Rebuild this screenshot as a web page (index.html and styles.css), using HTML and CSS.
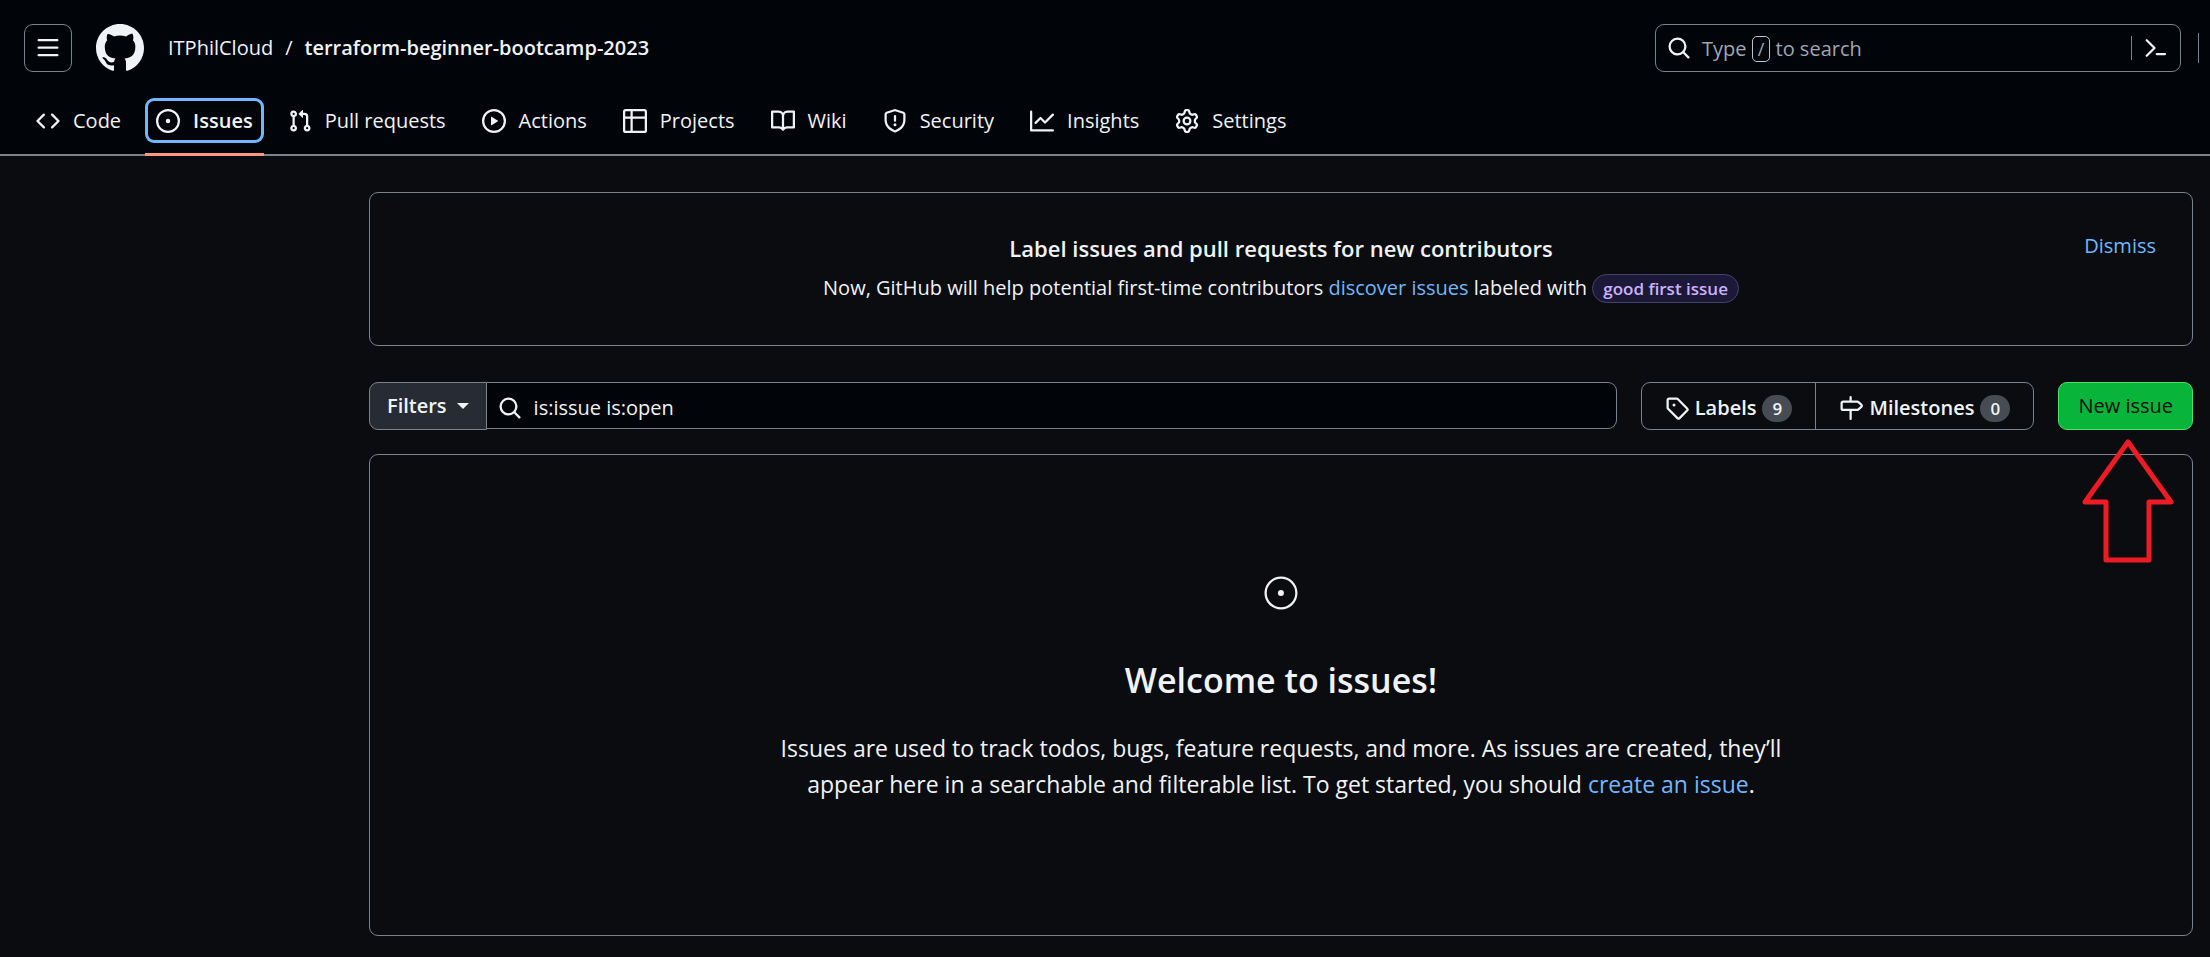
FILE: index.html
```html
<!DOCTYPE html>
<html lang="en">
<head>
<meta charset="utf-8">
<title>Issues · ITPhilCloud/terraform-beginner-bootcamp-2023</title>
<link rel="stylesheet" href="styles.css">
</head>
<body>
<header class="header">
  <div class="topbar">
    <button class="menu-btn" type="button" aria-label="Open menu">
      <svg class="icon" viewBox="0 0 16 16"><path d="M1 2.75A.75.75 0 0 1 1.75 2h12.5a.75.75 0 0 1 0 1.5H1.75A.75.75 0 0 1 1 2.75Zm0 5A.75.75 0 0 1 1.75 7h12.5a.75.75 0 0 1 0 1.5H1.75A.75.75 0 0 1 1 7.75ZM1.75 12h12.5a.75.75 0 0 1 0 1.5H1.75a.75.75 0 0 1 0-1.5Z"/></svg>
    </button>
    <a class="logo" href="#" aria-label="Homepage">
      <svg class="logo-mark" viewBox="0 0 16 16"><path d="M8 0c4.42 0 8 3.58 8 8a8.013 8.013 0 0 1-5.45 7.59c-.4.08-.55-.17-.55-.38 0-.27.01-1.13.01-2.2 0-.75-.25-1.23-.54-1.48 1.78-.2 3.65-.88 3.65-3.95 0-.88-.31-1.59-.82-2.15.08-.2.36-1.02-.08-2.12 0 0-.67-.22-2.2.82-.64-.18-1.32-.27-2-.27-.68 0-1.36.09-2 .27-1.53-1.03-2.2-.82-2.2-.82-.44 1.1-.16 1.92-.08 2.12-.51.56-.82 1.28-.82 2.15 0 3.06 1.86 3.75 3.64 3.95-.23.2-.44.55-.51 1.07-.46.21-1.61.55-2.33-.66-.15-.24-.6-.83-1.23-.82-.67.01-.27.38.01.53.34.19.73.9.82 1.13.16.45.68 1.31 2.69.94 0 .67.01 1.3.01 1.49 0 .21-.15.45-.55.38A7.995 7.995 0 0 1 0 8c0-4.42 3.58-8 8-8Z"/></svg>
    </a>
    <nav class="crumbs" aria-label="Breadcrumb">
      <a href="#">ITPhilCloud</a>
      <span class="slash">/</span>
      <a class="crumb-current" href="#">terraform-beginner-bootcamp-2023</a>
    </nav>
    <div class="search">
      <button class="search-btn" type="button">
        <svg class="icon" viewBox="0 0 16 16"><path d="M10.68 11.74a6 6 0 0 1-7.922-8.982 6 6 0 0 1 8.982 7.922l3.04 3.04a.749.749 0 0 1-.326 1.275.749.749 0 0 1-.734-.215ZM11.5 7a4.499 4.499 0 1 0-8.997 0A4.499 4.499 0 0 0 11.5 7Z"/></svg>
        <span class="search-hint">Type <kbd>/</kbd> to search</span>
      </button>
      <button class="command-btn" type="button" aria-label="Command palette">
        <svg class="icon" viewBox="0 0 16 16" fill="none" stroke="currentColor" stroke-width="1.5" stroke-linecap="round" stroke-linejoin="round"><path d="M1.8 2.8 7 8l-5.200 5.200M8.500 12h5.500"/></svg>
      </button>
    </div>
    <span class="divider"></span>
  </div>
  <nav class="tabs" aria-label="Repository">
    <a class="tab" href="#"><svg class="icon" viewBox="0 0 16 16"><path d="m11.28 3.22 4.25 4.25a.75.75 0 0 1 0 1.06l-4.25 4.25a.749.749 0 0 1-1.275-.326.749.749 0 0 1 .215-.734L13.94 8l-3.72-3.72a.749.749 0 0 1 .326-1.275.749.749 0 0 1 .734.215Zm-6.56 0a.751.751 0 0 1 1.042.018.751.751 0 0 1 .018 1.042L2.06 8l3.72 3.72a.749.749 0 0 1-.326 1.275.749.749 0 0 1-.734-.215L.47 8.53a.75.75 0 0 1 0-1.06Z"/></svg>Code</a>
    <a class="tab tab-active" href="#" aria-current="page"><svg class="icon" viewBox="0 0 16 16"><path d="M8 9.500a1.500 1.500 0 1 0 0-3 1.500 1.500 0 0 0 0 3Z"/><path d="M8 0a8 8 0 1 1 0 16A8 8 0 0 1 8 0ZM1.500 8a6.500 6.500 0 1 0 13 0 6.500 6.500 0 0 0-13 0Z"/></svg>Issues</a>
    <a class="tab" href="#"><svg class="icon" viewBox="0 0 16 16"><path d="M1.500 3.250a2.250 2.250 0 1 1 3 2.122v5.256a2.251 2.251 0 1 1-1.500 0V5.372A2.250 2.250 0 0 1 1.500 3.250Zm5.677-.177L9.573.677A.25.25 0 0 1 10 .854V2.500h1A2.500 2.500 0 0 1 13.500 5v5.628a2.251 2.251 0 1 1-1.500 0V5a1 1 0 0 0-1-1h-1v1.646a.25.25 0 0 1-.427.177L7.177 3.427a.25.25 0 0 1 0-.354ZM3.750 2.500a.75.75 0 1 0 0 1.500.75.75 0 0 0 0-1.500Zm0 9.500a.75.75 0 1 0 0 1.500.75.75 0 0 0 0-1.500Zm8.250.75a.75.75 0 1 0 1.500 0 .75.75 0 0 0-1.500 0Z"/></svg>Pull requests</a>
    <a class="tab" href="#"><svg class="icon" viewBox="0 0 16 16"><path d="M8 0a8 8 0 1 1 0 16A8 8 0 0 1 8 0ZM1.500 8a6.500 6.500 0 1 0 13 0 6.500 6.500 0 0 0-13 0Zm4.879-2.773 4.264 2.559a.25.25 0 0 1 0 .428l-4.264 2.559A.25.25 0 0 1 6 10.559V5.442a.25.25 0 0 1 .379-.215Z"/></svg>Actions</a>
    <a class="tab" href="#"><svg class="icon" viewBox="0 0 16 16"><path d="M0 1.750C0 .784.784 0 1.750 0h12.500C15.216 0 16 .784 16 1.750v12.500A1.750 1.750 0 0 1 14.250 16H1.750A1.750 1.750 0 0 1 0 14.250ZM6.500 6.500v8h7.750a.25.25 0 0 0 .25-.25V6.500Zm8-1.500V1.750a.25.25 0 0 0-.25-.25H6.500V5Zm-13 1.500v7.750c0 .138.112.25.25.25H5v-8ZM5 5V1.500H1.750a.25.25 0 0 0-.25.25V5Z"/></svg>Projects</a>
    <a class="tab" href="#"><svg class="icon" viewBox="0 0 16 16"><path d="M0 1.750A.75.75 0 0 1 .75 1h4.253c1.227 0 2.317.59 3 1.501A3.743 3.743 0 0 1 11.006 1h4.245a.75.75 0 0 1 .75.75v10.500a.75.75 0 0 1-.75.75h-4.507a2.250 2.250 0 0 0-1.591.659l-.622.621a.75.75 0 0 1-1.060 0l-.622-.621A2.250 2.250 0 0 0 5.258 13H.75a.75.75 0 0 1-.75-.75Zm7.251 10.324.004-5.073-.002-2.253A2.250 2.250 0 0 0 5.003 2.500H1.500v9h3.757a3.750 3.750 0 0 1 1.994.574ZM8.755 4.750l-.004 7.322a3.752 3.752 0 0 1 1.992-.572H14.500v-9h-3.495a2.250 2.250 0 0 0-2.250 2.250Z"/></svg>Wiki</a>
    <a class="tab" href="#"><svg class="icon" viewBox="0 0 16 16"><path d="M7.467.133a1.748 1.748 0 0 1 1.066 0l5.250 1.680A1.750 1.750 0 0 1 15 3.480V7c0 1.566-.32 3.182-1.303 4.682-.983 1.498-2.585 2.813-5.032 3.855a1.697 1.697 0 0 1-1.330 0c-2.447-1.042-4.049-2.357-5.032-3.855C1.320 10.182 1 8.566 1 7V3.480a1.750 1.750 0 0 1 1.217-1.667Zm.61 1.429a.25.25 0 0 0-.153 0l-5.250 1.680a.25.25 0 0 0-.174.238V7c0 1.358.275 2.666 1.057 3.860.784 1.194 2.121 2.340 4.366 3.297a.196.196 0 0 0 .154 0c2.245-.956 3.582-2.104 4.366-3.298C13.225 9.666 13.500 8.360 13.500 7V3.480a.251.251 0 0 0-.174-.237l-5.250-1.680ZM8.750 4.750v3a.75.75 0 0 1-1.500 0v-3a.75.75 0 0 1 1.500 0ZM9 10.500a1 1 0 1 1-2 0 1 1 0 0 1 2 0Z"/></svg>Security</a>
    <a class="tab" href="#"><svg class="icon" viewBox="0 0 16 16"><path d="M1.500 1.750V13.500h13.750a.75.75 0 0 1 0 1.500H.75a.75.75 0 0 1-.75-.75V1.750a.75.75 0 0 1 1.500 0Zm14.280 2.530-5.250 5.250a.75.75 0 0 1-1.060 0L7 7.060 4.280 9.780a.751.751 0 0 1-1.042-.018.751.751 0 0 1-.018-1.042l3.250-3.250a.75.75 0 0 1 1.060 0L10 7.940l4.720-4.720a.751.751 0 0 1 1.042.018.751.751 0 0 1 .018 1.042Z"/></svg>Insights</a>
    <a class="tab" href="#"><svg class="icon" viewBox="0 0 16 16"><path d="M8 0a8.200 8.200 0 0 1 .701.031C9.444.095 9.990.645 10.160 1.290l.288 1.107c.018.066.079.158.212.224.231.114.454.243.668.386.123.082.233.090.299.071l1.103-.303c.644-.176 1.392.021 1.820.630.270.385.506.792.704 1.218.315.675.111 1.422-.364 1.891l-.814.806c-.049.048-.098.147-.088.294.016.257.016.515 0 .772-.010.147.038.246.088.294l.814.806c.475.469.679 1.216.364 1.891a7.977 7.977 0 0 1-.704 1.217c-.428.610-1.176.807-1.820.630l-1.102-.302c-.067-.019-.177-.011-.300.071a5.909 5.909 0 0 1-.668.386c-.133.066-.194.158-.211.224l-.290 1.106c-.168.646-.715 1.196-1.458 1.260a8.006 8.006 0 0 1-1.402 0c-.743-.064-1.289-.614-1.458-1.260l-.289-1.106c-.018-.066-.079-.158-.212-.224a5.738 5.738 0 0 1-.668-.386c-.123-.082-.233-.090-.299-.071l-1.103.303c-.644.176-1.392-.021-1.820-.630a8.120 8.120 0 0 1-.704-1.218c-.315-.675-.111-1.422.363-1.891l.815-.806c.050-.048.098-.147.088-.294a6.214 6.214 0 0 1 0-.772c.010-.147-.038-.246-.088-.294l-.815-.806C.635 6.045.431 5.298.746 4.623a7.920 7.920 0 0 1 .704-1.217c.428-.610 1.176-.807 1.820-.630l1.102.302c.067.019.177.011.300-.071.214-.143.437-.272.668-.386.133-.066.194-.158.211-.224l.290-1.106C6.009.645 6.556.095 7.299.030 7.530.010 7.764 0 8 0Zm-.571 1.525c-.036.003-.108.036-.137.146l-.289 1.105c-.147.561-.549.967-.998 1.189-.173.086-.340.183-.500.290-.417.278-.970.423-1.529.270l-1.103-.303c-.109-.030-.175.016-.195.045-.220.312-.412.644-.573.990-.014.031-.021.110.059.190l.815.806c.411.406.562.957.530 1.456a4.709 4.709 0 0 0 0 .582c.032.499-.119 1.050-.530 1.456l-.815.806c-.081.080-.073.159-.059.190.162.346.353.677.573.989.020.030.085.076.195.046l1.102-.303c.560-.153 1.113-.008 1.530.270.161.107.328.204.501.290.447.222.850.629.997 1.189l.289 1.105c.029.109.101.143.137.146a6.600 6.600 0 0 0 1.142 0c.036-.003.108-.036.137-.146l.289-1.105c.147-.561.549-.967.998-1.189.173-.086.340-.183.500-.290.417-.278.970-.423 1.529-.270l1.103.303c.109.029.175-.016.195-.045.220-.313.411-.644.573-.990.014-.031.021-.110-.059-.190l-.815-.806c-.411-.406-.562-.957-.530-1.456a4.709 4.709 0 0 0 0-.582c-.032-.499.119-1.050.530-1.456l.815-.806c.081-.080.073-.159.059-.190a6.464 6.464 0 0 0-.573-.989c-.020-.030-.085-.076-.195-.046l-1.102.303c-.560.153-1.113.008-1.530-.270a4.440 4.440 0 0 0-.501-.290c-.447-.222-.850-.629-.997-1.189l-.289-1.105c-.029-.110-.101-.143-.137-.146a6.600 6.600 0 0 0-1.142 0ZM11 8a3 3 0 1 1-6 0 3 3 0 0 1 6 0ZM9.500 8a1.500 1.500 0 1 0-3.001.001A1.500 1.500 0 0 0 9.500 8Z"/></svg>Settings</a>
  </nav>
</header>

<main class="content">
  <section class="banner">
    <div class="banner-text">
      <h2 class="banner-title">Label issues and pull requests for new contributors</h2>
      <p class="banner-line">Now, GitHub will help potential first-time contributors <a href="#">discover issues</a> labeled with <span class="pill">good first issue</span></p>
    </div>
    <button class="dismiss" type="button">Dismiss</button>
  </section>

  <div class="toolbar">
    <form class="filter">
      <button class="filters-btn" type="button">Filters <span class="caret"></span></button>
      <label class="filter-box">
        <svg class="icon" viewBox="0 0 16 16"><path d="M10.68 11.74a6 6 0 0 1-7.922-8.982 6 6 0 0 1 8.982 7.922l3.04 3.04a.749.749 0 0 1-.326 1.275.749.749 0 0 1-.734-.215ZM11.5 7a4.499 4.499 0 1 0-8.997 0A4.499 4.499 0 0 0 11.5 7Z"/></svg>
        <input class="filter-input" type="text" value="is:issue is:open" aria-label="Search all issues">
      </label>
    </form>
    <div class="subnav">
      <a class="subnav-item" href="#"><svg class="icon" viewBox="0 0 16 16"><path d="M1 7.775V2.750C1 1.784 1.784 1 2.750 1h5.025c.464 0 .910.184 1.238.513l6.250 6.250a1.750 1.750 0 0 1 0 2.474l-5.026 5.026a1.750 1.750 0 0 1-2.474 0l-6.250-6.250A1.752 1.752 0 0 1 1 7.775Zm1.500 0c0 .066.026.130.073.177l6.250 6.250a.25.25 0 0 0 .354 0l5.025-5.025a.25.25 0 0 0 0-.354l-6.250-6.250a.25.25 0 0 0-.177-.073H2.750a.25.25 0 0 0-.25.25ZM6 5a1 1 0 1 1 0 2 1 1 0 0 1 0-2Z"/></svg><span>Labels</span><span class="count">9</span></a>
      <a class="subnav-item" href="#"><svg class="icon" viewBox="0 0 16 16"><path d="M7.750 0a.75.75 0 0 1 .75.75V3h3.634c.414 0 .814.147 1.130.414l2.070 1.750a1.750 1.750 0 0 1 0 2.672l-2.070 1.750a1.750 1.750 0 0 1-1.130.414H8.500v5.250a.75.75 0 0 1-1.500 0V10H2.750A1.750 1.750 0 0 1 1 8.250v-3.500C1 3.784 1.784 3 2.750 3H7V.75A.75.75 0 0 1 7.750 0Zm4.384 8.500a.25.25 0 0 0 .161-.060l2.070-1.750a.248.248 0 0 0 0-.380l-2.070-1.750a.25.25 0 0 0-.161-.060H2.750a.25.25 0 0 0-.25.25v3.500c0 .138.112.25.25.25h9.384Z"/></svg><span>Milestones</span><span class="count">0</span></a>
    </div>
    <div class="new-issue">
      <button class="new-btn" type="button">New issue</button>
      <svg class="arrow" viewBox="0 0 92 124" fill="none" stroke="#ed1c24" stroke-width="5" stroke-linejoin="round"><path d="M46 3 89 63H67V121H24V63H3Z"/></svg>
    </div>
  </div>

  <section class="blank">
    <svg class="blank-icon" viewBox="0 0 24 24"><path d="M12 1c6.075 0 11 4.925 11 11s-4.925 11-11 11S1 18.075 1 12 5.925 1 12 1ZM2.500 12a9.500 9.500 0 0 0 9.500 9.500 9.500 9.500 0 0 0 9.500-9.500A9.500 9.500 0 0 0 12 2.500 9.500 9.500 0 0 0 2.500 12Zm9.500 2a2 2 0 1 1-.001-3.999A2 2 0 0 1 12 14Z"/></svg>
    <h1 class="blank-title">Welcome to issues!</h1>
    <p class="blank-text">Issues are used to track todos, bugs, feature requests, and more. As issues are created, they’ll appear here in a searchable and filterable list. To get started, you should <a href="#">create an issue</a>.</p>
  </section>
</main>
</body>
</html>
```

FILE: styles.css
```css
:root {
  --bg: #0a0c10;
  --bg-inset: #010409;
  --fg: #f0f3f6;
  --border: #7a828e;
  --link: #71b7ff;
}

* {
  box-sizing: border-box;
}

body {
  margin: 0;
  min-height: 100vh;
  background: var(--bg);
  color: var(--fg);
  font: 20px/30px "Open Sans", "Noto Sans", sans-serif;
}

button,
input {
  margin: 0;
  padding: 0;
  border: 0;
  background: none;
  color: inherit;
  font: inherit;
}

a {
  color: var(--link);
  text-decoration: none;
}

h1,
h2,
p {
  margin: 0;
}

.icon {
  width: 24px;
  height: 24px;
  flex: none;
  fill: currentColor;
}

.icon[fill="none"] {
  fill: none;
}

/* Header */
.header {
  background: var(--bg-inset);
  border-bottom: 2px solid var(--border);
}

.topbar {
  display: flex;
  align-items: center;
  padding: 24px 11px 0 24px;
}

.menu-btn {
  display: grid;
  place-items: center;
  width: 48px;
  height: 48px;
  border: 1px solid var(--border);
  border-radius: 9px;
}

.logo {
  margin: 0 24px;
  color: var(--fg);
}

.logo-mark {
  display: block;
  width: 48px;
  height: 48px;
  fill: currentColor;
}

.crumbs {
  display: flex;
  gap: 12px;
}

.crumbs a {
  color: var(--fg);
}

.crumbs .crumb-current {
  font-weight: 600;
}

.search {
  display: flex;
  align-items: center;
  width: 526px;
  height: 48px;
  margin-left: auto;
  border: 1px solid var(--border);
  border-radius: 9px;
}

.search-btn {
  display: flex;
  flex: 1;
  align-items: center;
  gap: 11px;
  padding-left: 11px;
}

.search-hint {
  padding-top: 2px;
  color: #9ea7b3;
}

.search-hint kbd {
  padding: 0 5px;
  border: 1px solid #bdc4cc;
  border-radius: 5px;
  font: 18px/24px "Open Sans", sans-serif;
}

.command-btn {
  display: flex;
  padding: 0 12px;
  border-left: 1px solid var(--border);
}

.divider {
  width: 1px;
  height: 30px;
  margin-left: 17px;
  background: var(--border);
}

.tabs {
  display: flex;
  gap: 12px;
  padding: 26px 24px 0;
}

.tab {
  position: relative;
  display: flex;
  align-items: center;
  gap: 13px;
  height: 45px;
  margin-bottom: 11px;
  padding: 0 12px;
  border-radius: 9px;
  color: var(--fg);
}

.tab-active {
  padding: 0 11px;
  font-weight: 600;
  box-shadow: inset 0 0 0 3px var(--link);
}

.tab-active::after {
  content: "";
  position: absolute;
  right: 0;
  bottom: -13px;
  left: 0;
  height: 3px;
  background: #ff967d;
}

/* Content */
.content {
  padding: 36px 17px 20px 369px;
}

.banner,
.blank {
  border: 1px solid var(--border);
  border-radius: 9px;
}

.banner {
  position: relative;
  padding: 37px 36px 39px;
  text-align: center;
}

.banner-title {
  margin-bottom: 4px;
  font-size: 22px;
  font-weight: 600;
  line-height: 36px;
}

.banner-line {
  line-height: 36px;
}

.pill {
  display: inline-block;
  padding: 0 10px;
  border: 1px solid #49406f;
  border-radius: 15px;
  background: #1c1938;
  color: #cbb2ff;
  font-size: 17px;
  font-weight: 600;
  line-height: 27px;
}

.dismiss {
  position: absolute;
  top: 38px;
  right: 36px;
  color: var(--link);
}

.toolbar {
  display: flex;
  gap: 24px;
  margin: 36px 0 24px;
}

.filter {
  display: flex;
  flex: 1;
}

.filters-btn {
  display: flex;
  align-items: center;
  gap: 10px;
  height: 48px;
  padding: 0 17px;
  border: 1px solid var(--border);
  border-radius: 9px 0 0 9px;
  background: #272b33;
  font-weight: 600;
}

.caret {
  border: 6px solid transparent;
  border-top-color: currentColor;
  border-bottom: 0;
}

.filter-box {
  display: flex;
  flex: 1;
  align-items: center;
  gap: 12px;
  height: 47px;
  padding: 4px 11px 0;
  border: 1px solid var(--border);
  border-left: 0;
  border-radius: 0 9px 9px 0;
  background: var(--bg-inset);
}

.filter-input {
  flex: 1;
  outline: 0;
}

.subnav {
  display: flex;
  border: 1px solid var(--border);
  border-radius: 9px;
}

.subnav-item {
  display: flex;
  align-items: center;
  gap: 6px;
  padding: 4px 23px 0;
  color: var(--fg);
  font-weight: 600;
}

.subnav-item + .subnav-item {
  border-left: 1px solid var(--border);
}

.count {
  min-width: 30px;
  border-radius: 15px;
  background: #464b54;
  font-size: 17px;
  line-height: 27px;
  text-align: center;
}

.new-issue {
  position: relative;
}

.new-btn {
  height: 48px;
  padding: 0 19px;
  border: 1px solid #4ae168;
  border-radius: 9px;
  background: #09b43a;
  color: #0a0c10;
}

.arrow {
  position: absolute;
  top: 57px;
  left: 24px;
  width: 92px;
  height: 124px;
}

.blank {
  display: flex;
  flex-direction: column;
  align-items: center;
  padding: 120px 48px 133px;
  text-align: center;
}

.blank-icon {
  width: 36px;
  height: 36px;
  fill: currentColor;
}

.blank-title {
  margin: 42px 0 23px;
  font-size: 34px;
  font-weight: 600;
  line-height: 54px;
}

.blank-text {
  max-width: 1040px;
  font-size: 23px;
  line-height: 36px;
}
```
